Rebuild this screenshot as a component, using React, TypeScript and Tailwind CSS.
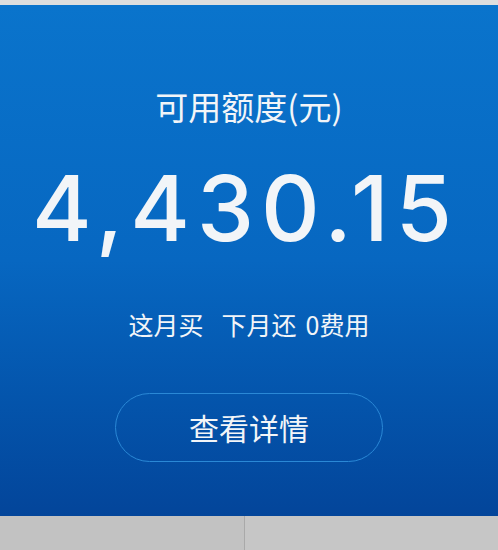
export default function App() {
  const cjk = { fontFamily: '"Noto Sans CJK SC", "Noto Sans", sans-serif' };
  return (
    <div className="flex h-[550px] w-[498px] flex-col overflow-hidden bg-[#c3c3c3]">
      <div className="h-[5px] bg-[#dedede]" />
      <div className="flex h-[511px] flex-col items-center bg-gradient-to-b from-[#0a74cc] via-[#0767c1] to-[#03459a] text-[#f2f5f8]">
        <div className="mt-[81px] text-[33px] leading-[40px]" style={cjk}>
          可用额度(元)
        </div>
        <div
          className="mt-[34px] -ml-[7px] text-[91px] font-medium leading-[96px] tracking-[7px]"
          style={{ fontFamily: 'Inter, "Liberation Sans", sans-serif' }}
        >
          4,430.15
        </div>
        <div className="mt-[53px] flex text-[25px] leading-[30px]" style={cjk}>
          <span>这月买</span>
          <span className="ml-[18px]">下月还</span>
          <span className="ml-[9px]">0费用</span>
        </div>
        <button
          type="button"
          className="mt-[54px] flex h-[69px] w-[268px] items-center justify-center rounded-full border border-[#2a88d6] text-[30px]"
          style={cjk}
        >
          查看详情
        </button>
      </div>
      <div className="flex flex-1">
        <div className="w-[245px] border-r border-[#a9a9a9] bg-[#c2c2c2]" />
        <div className="flex-1 bg-[#c6c6c6]" />
      </div>
    </div>
  );
}
